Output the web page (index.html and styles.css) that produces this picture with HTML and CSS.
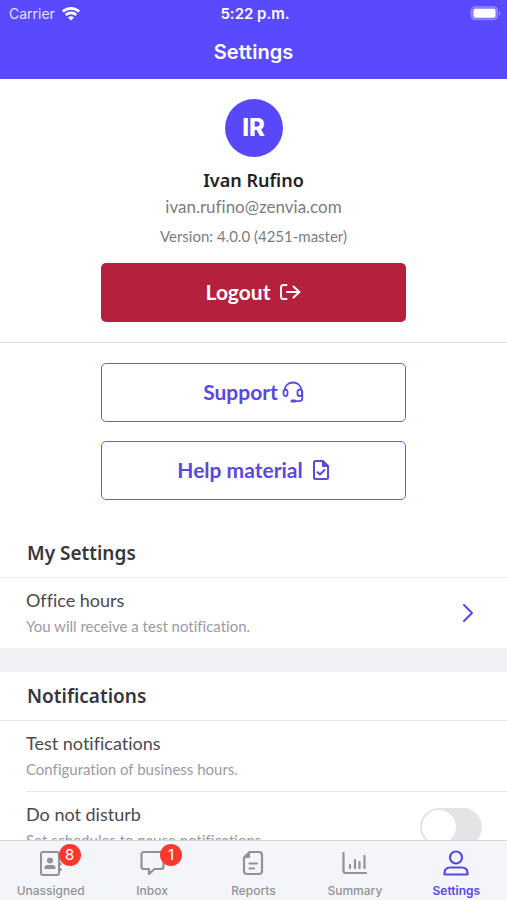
FILE: index.html
```html
<!DOCTYPE html>
<html lang="en">
<head>
<meta charset="utf-8">
<meta name="viewport" content="width=device-width, initial-scale=1">
<title>Settings</title>
<link rel="stylesheet" href="styles.css">
</head>
<body>
<header class="top">
  <div class="status">
    <span class="carrier">Carrier
      <svg width="18" height="14" viewBox="0 0 18 14" fill="none" stroke="currentColor" stroke-width="2.6"><path d="M.8 4.600a12 12 0 0 1 16.400 0M3.700 8a7.800 7.800 0 0 1 10.600 0"/><path d="M9 13.600 6 10.600a4.300 4.300 0 0 1 6 0z" fill="currentColor" stroke="none"/></svg>
    </span>
    <span class="time">5:22 p.m.</span>
    <svg class="battery" width="31" height="15" viewBox="0 0 31 15"><rect x="1" y=".7" width="26.600" height="13" rx="4" fill="#8379ff" stroke="#938aff"/><rect x="3.500" y="2.800" width="22" height="9" rx="2" fill="#fff"/><path d="M29 5q2.500 2.300 0 4.600z" fill="#9d94ff"/></svg>
  </div>
  <h1 class="title">Settings</h1>
</header>

<main class="content">
  <section class="profile">
    <div class="avatar">IR</div>
    <h2 class="name">Ivan Rufino</h2>
    <p class="email">ivan.rufino@zenvia.com</p>
    <p class="version">Version: 4.0.0 (4251-master)</p>
    <button class="btn btn-danger" type="button">Logout
      <svg width="22" height="18" viewBox="0 0 22 18" fill="none" stroke="currentColor" stroke-width="2" stroke-linecap="round" stroke-linejoin="round"><path d="M7.500 2H4.500Q2 2 2 4.500v9Q2 16 4.500 16h3M8 9h12M14.500 3.500 20.500 9l-6 5.500"/></svg>
    </button>
  </section>

  <section class="links">
    <button class="btn btn-outline btn-near" type="button">Support
      <svg width="22" height="22" viewBox="0 0 22 22" fill="none" stroke="currentColor" stroke-width="1.800" stroke-linecap="round" stroke-linejoin="round"><path d="M2.500 9.500C3 4.500 6.500 1.500 11 1.500s8 3 8.500 8M20.300 10.500v6.500q0 3.200-3 3.200h-5"/><rect x="1.500" y="8.500" width="4" height="6.500" rx="2"/><rect x="15.500" y="8.500" width="4.500" height="6.500" rx="2"/><path d="M10 20h3" stroke-width="3"/></svg>
    </button>
    <button class="btn btn-outline" type="button">Help material
      <svg width="18" height="22" viewBox="0 0 18 22" fill="none" stroke="currentColor" stroke-width="2" stroke-linecap="round" stroke-linejoin="round"><path d="M11 2H3.500Q2 2 2 3.500v15Q2 20 3.500 20h11q1.500 0 1.500-1.500V7z"/><path d="M10.500 2v5.500H16z" fill="currentColor" stroke-width="1"/><path d="m5.500 13.200 2.500 2.300 4.500-4.500"/></svg>
    </button>
  </section>

  <section class="group">
    <h2 class="group-title">My Settings</h2>
    <a class="row" href="#office-hours">
      <span class="row-text"><span class="row-title">Office hours</span><span class="row-sub">You will receive a test notification.</span></span>
      <svg class="chevron" width="12" height="20" viewBox="0 0 12 20" fill="none" stroke="currentColor" stroke-width="2" stroke-linecap="round" stroke-linejoin="round"><path d="m2 2 8 8-8 8"/></svg>
    </a>
  </section>

  <section class="group">
    <h2 class="group-title">Notifications</h2>
    <a class="row" href="#test">
      <span class="row-text"><span class="row-title">Test notifications</span><span class="row-sub">Configuration of business hours.</span></span>
    </a>
    <label class="row">
      <span class="row-text"><span class="row-title">Do not disturb</span><span class="row-sub">Set schedules to pause notifications.</span></span>
      <input class="switch" type="checkbox">
    </label>
  </section>
</main>

<nav class="tabs">
  <a class="tab" href="#unassigned">
    <span class="tab-icon"><svg width="28" height="28" viewBox="0 0 28 28" fill="none" stroke="currentColor" stroke-width="2"><rect x="4" y="3" width="18" height="23" rx="2"/><circle cx="13" cy="11.500" r="3" fill="currentColor" stroke="none"/><path d="M7.500 20v-1q0-3 3-3h5q3 0 3 3v1z" fill="currentColor" stroke="none"/><path d="M23.500 8v3M23.500 13.500v3M23.500 19v3"/></svg><span class="badge">8</span></span>
    Unassigned</a>
  <a class="tab" href="#inbox">
    <span class="tab-icon"><svg width="28" height="28" viewBox="0 0 28 28" fill="none" stroke="currentColor" stroke-width="2.200" stroke-linejoin="round"><path d="M6 3h17q2.500 0 2.500 2.500v12q0 2.500-2.500 2.500h-6.500L11 25v-5H6q-2.500 0-2.500-2.500v-12Q3.500 3 6 3z"/></svg><span class="badge">1</span></span>
    Inbox</a>
  <a class="tab" href="#reports">
    <span class="tab-icon"><svg width="28" height="28" viewBox="0 0 28 28" fill="none" stroke="currentColor" stroke-width="2.200" stroke-linecap="round" stroke-linejoin="round"><path d="M10.500 3H20q3 0 3 3v16q0 3-3 3H8q-3 0-3-3V8.500z"/><path d="M10.500 3v5.500H5z" fill="currentColor" stroke-width="1"/><path d="M10.500 14.500h7.500M10.500 19.500h4.500"/></svg></span>
    Reports</a>
  <a class="tab" href="#summary">
    <span class="tab-icon"><svg width="28" height="28" viewBox="0 0 28 28" fill="none" stroke="currentColor" stroke-width="2.200" stroke-linecap="round" stroke-linejoin="round"><path d="M2.500 4v18q0 2 2 2H25M9 16v3M14 11v8M18.500 13v6M23.500 7v12"/></svg></span>
    Summary</a>
  <a class="tab tab-active" href="#settings" aria-current="page">
    <span class="tab-icon"><svg width="28" height="28" viewBox="0 0 28 28" fill="none" stroke="currentColor" stroke-width="2.200" stroke-linejoin="round"><circle cx="14" cy="8.500" r="6"/><path d="M2.500 25.500v-1.500q0-5.500 6-5.500h11q6 0 6 5.500v1.500z"/></svg></span>
    Settings</a>
</nav>
</body>
</html>
```
FILE: styles.css
```css
* { box-sizing: border-box; }

body {
  margin: 0;
  height: 100vh;
  display: flex;
  flex-direction: column;
  background: #fff;
  color: #4a4a4e;
  font-family: Lato, sans-serif;
  font-variant-ligatures: none;
}

h1, h2, p { margin: 0; }
svg { display: block; flex: none; }
a { color: inherit; text-decoration: none; }

.top {
  flex: none;
  height: 79px;
  background: #594aff;
  color: #fff;
  font-family: Inter, sans-serif;
}

.status {
  display: grid;
  grid-template-columns: 1fr auto 1fr;
  align-items: center;
  height: 27px;
  padding: 0 6px 0 9px;
  font-size: 15px;
}

.carrier { display: flex; align-items: center; gap: 7px; color: #e4e1ff; font-size: 14px; }
.carrier svg { color: #fff; }
.time { font-weight: 600; }
.battery { justify-self: end; }

.title {
  text-align: center;
  font-size: 20px;
  line-height: 50px;
  font-weight: 600;
}

.content {
  flex: 1;
  min-height: 0;
  overflow-y: auto;
  scrollbar-width: none;
}

.profile, .links {
  display: flex;
  flex-direction: column;
  align-items: center;
}

.profile {
  padding: 20px 0;
  border-bottom: 1px solid #dedee2;
}

.avatar {
  width: 58px;
  height: 58px;
  border-radius: 50%;
  background: #5849f8;
  color: #fff;
  font: 800 24px/58px Inter, sans-serif;
  text-align: center;
}

.name, .group-title { font-family: "Noto Sans", sans-serif; font-weight: 600; }
.name { margin-top: 9px; font-size: 18px; line-height: 28px; color: #222; }
.email { font-size: 17px; line-height: 26px; color: #7c7c7e; }
.version { margin: 3px 0 14px; font-size: 15px; line-height: 26px; color: #7c7c7e; }

.btn {
  display: flex;
  align-items: center;
  justify-content: center;
  gap: 9px;
  width: 60%;
  height: 59px;
  padding: 0 0 1px;
  border: 0;
  border-radius: 5px;
  font: 700 21px/28px Lato, sans-serif;
}

.btn-danger { background: #b5203e; color: #fff; }
.btn-outline { background: #fff; color: #5a49df; border: 1px solid #6a5af5; }
.btn-near { gap: 4px; }

.links { gap: 19px; padding: 20px 0 29px; }

.group + .group { border-top: 24px solid #f0f0f5; }

.group-title {
  padding: 0 27px;
  font-size: 19px;
  line-height: 48px;
  color: #37373b;
  border-bottom: 1px solid #e8e8ec;
}

.row {
  display: flex;
  align-items: center;
  justify-content: space-between;
  margin-left: 26px;
  padding: 9px 25px 9px 0;
}

.row + .row { border-top: 1px solid #e8e8ec; }
.row-text { display: flex; flex-direction: column; line-height: 26px; }
.row-title { font-size: 18px; }
.row-sub { font-size: 15px; color: #9b9b9f; }
.chevron { margin-right: 8px; color: #5a49df; }

.switch {
  appearance: none;
  width: 62px;
  height: 38px;
  margin: 0;
  border-radius: 19px;
  background: #e4e4e6;
}

.switch::before {
  content: "";
  display: block;
  width: 34px;
  height: 34px;
  margin: 2px;
  border-radius: 50%;
  background: #fff;
}

.tabs {
  flex: none;
  display: grid;
  grid-template-columns: repeat(5, 1fr);
  height: 60px;
  padding-top: 8px;
  background: #f3f5f8;
  border-top: 1px solid #d3d5d8;
  font: 500 12px/28px Inter, sans-serif;
  color: #929396;
}

.tab { display: flex; flex-direction: column; align-items: center; }
.tab-active { color: #5a49df; font-weight: 600; }
.tab-icon { position: relative; }

.badge {
  position: absolute;
  top: -5px;
  left: 22px;
  width: 22px;
  height: 22px;
  border-radius: 50%;
  background: #fb382f;
  color: #fff;
  font-size: 15px;
  line-height: 22px;
  font-weight: 400;
  text-align: center;
}
```
